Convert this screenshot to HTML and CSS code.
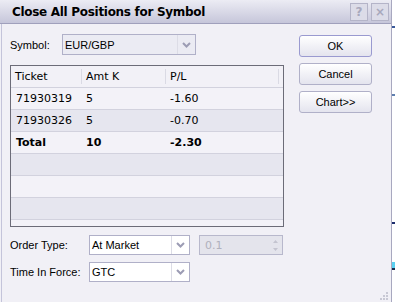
FILE: index.html
```html
<!DOCTYPE html>
<html lang="en">
<head>
    <meta charset="UTF-8">
    <title>Close All Positions for Symbol</title>
    <link rel="stylesheet" href="styles.css">
</head>
<body>
    <div class="page">
        <div class="window">
            <div class="titlebar">
                <span class="title">Close All Positions for Symbol</span>
                <div class="caption-buttons">
                    <span class="cap-btn">?</span>
                    <span class="cap-btn">&times;</span>
                </div>
            </div>
            <div class="content">
                <div class="main">
                    <div class="field-row symbol-row">
                        <span class="label symbol-label">Symbol:</span>
                        <div class="combo combo-symbol">
                            <span class="combo-text">EUR/GBP</span>
                            <span class="combo-arrow">
                                <svg width="9" height="6" viewBox="0 0 9 6"><path d="M1 1 L4.5 4.5 L8 1" fill="none" stroke="#9c9cb4" stroke-width="2"/></svg>
                            </span>
                        </div>
                    </div>

                    <div class="grid">
                        <div class="grid-row grid-head">
                            <div class="cell c1">Ticket</div>
                            <div class="cell c2">Amt K</div>
                            <div class="cell c3">P/L</div>
                        </div>
                        <div class="grid-row light">
                            <div class="cell c1">71930319</div>
                            <div class="cell c2">5</div>
                            <div class="cell c3">-1.60</div>
                        </div>
                        <div class="grid-row dark">
                            <div class="cell c1">71930326</div>
                            <div class="cell c2">5</div>
                            <div class="cell c3">-0.70</div>
                        </div>
                        <div class="grid-row light total">
                            <div class="cell c1">Total</div>
                            <div class="cell c2">10</div>
                            <div class="cell c3">-2.30</div>
                        </div>
                        <div class="grid-row dark"></div>
                        <div class="grid-row light"></div>
                        <div class="grid-row dark"></div>
                        <div class="grid-row light"></div>
                    </div>

                    <div class="field-row order-row">
                        <span class="label wide-label">Order Type:</span>
                        <div class="combo combo-small">
                            <span class="combo-text">At Market</span>
                            <span class="combo-arrow">
                                <svg width="9" height="6" viewBox="0 0 9 6"><path d="M1 1 L4.5 4.5 L8 1" fill="none" stroke="#9c9cb4" stroke-width="2"/></svg>
                            </span>
                        </div>
                        <div class="spinner">
                            <span class="spin-text">0.1</span>
                            <span class="spin-arrows">
                                <svg width="7" height="13" viewBox="0 0 7 13"><path d="M3.5 1 L6 4 L1 4 Z M1 9 L6 9 L3.5 12 Z" fill="#c4c4d0"/></svg>
                            </span>
                        </div>
                    </div>
                    <div class="field-row tif-row">
                        <span class="label wide-label">Time In Force:</span>
                        <div class="combo combo-small">
                            <span class="combo-text">GTC</span>
                            <span class="combo-arrow">
                                <svg width="9" height="6" viewBox="0 0 9 6"><path d="M1 1 L4.5 4.5 L8 1" fill="none" stroke="#9c9cb4" stroke-width="2"/></svg>
                            </span>
                        </div>
                    </div>
                </div>

                <div class="side">
                    <button class="btn btn-default">OK</button>
                    <button class="btn">Cancel</button>
                    <button class="btn">Chart&gt;&gt;</button>
                </div>
            </div>
            <svg class="grip" width="9" height="9" viewBox="0 0 9 9">
                <rect x="6" y="0" width="2" height="2" fill="#c8c8d4"/>
                <rect x="3" y="3" width="2" height="2" fill="#c8c8d4"/>
                <rect x="6" y="3" width="2" height="2" fill="#c8c8d4"/>
                <rect x="0" y="6" width="2" height="2" fill="#c8c8d4"/>
                <rect x="3" y="6" width="2" height="2" fill="#c8c8d4"/>
                <rect x="6" y="6" width="2" height="2" fill="#c8c8d4"/>
            </svg>
        </div>
        <div class="backdrop"></div>
    </div>
</body>
</html>
```

FILE: styles.css
```css
/* Dialog theme */
body {
    margin: 0;
    background-color: #ffffff;
    font-family: "Liberation Sans", Arial, sans-serif;
    font-size: 11px;
    color: #000;
}
.page {
    display: flex;
    height: 302px;
    overflow: hidden;
}
.window {
    width: 391px;
    height: 302px;
    border-right: 1px solid #a8a8c0;
    background: #f1f0f6;
    display: flex;
    flex-direction: column;
    position: relative;
}
.backdrop {
    width: 3px;
    background: linear-gradient(#ffffff 0, #ffffff 26px, #3a5a9a 26px, #3a5a9a 28px, #ffffff 28px, #ffffff 94px, #6080b0 94px, #6080b0 96px, #ffffff 96px, #ffffff 222px, #1c2c6c 222px, #1c2c6c 224px, #ffffff 224px, #ffffff 262px, #5ad0f0 262px, #5ad0f0 268px, #1c2c4c 268px, #1c2c4c 270px, #ffffff 270px);
}

/* Title bar */
.titlebar {
    height: 23px;
    border-bottom: 1px solid #a0a0bc;
    background: linear-gradient(#ececf4, #c6c6da);
    display: flex;
    align-items: center;
    justify-content: space-between;
    padding: 0 2px 0 12px;
}
.title {
    font-family: "DejaVu Sans", Verdana, sans-serif;
    font-weight: bold;
    font-size: 12px;
    letter-spacing: -0.3px;
    color: #000;
}
.caption-buttons {
    display: flex;
    gap: 3px;
    padding-top: 1px;
}
.cap-btn {
    width: 16px;
    height: 16px;
    border: 1px solid #b4b4c8;
    background: #dcdce8;
    color: #a8a8bc;
    font-family: "DejaVu Sans", Verdana, sans-serif;
    font-weight: bold;
    font-size: 12px;
    display: flex;
    align-items: center;
    justify-content: center;
}

/* Content */
.content {
    flex: 1;
    display: flex;
    margin-left: 1px;
    border-left: 1px solid #c4c4da;
    padding: 10px 0 0 8px;
}
.main {
    width: 274px;
    display: flex;
    flex-direction: column;
}
.field-row {
    display: flex;
    align-items: center;
}
.label {
    color: #000;
}
.symbol-label {
    width: 52px;
}
.wide-label {
    width: 79px;
}

/* Combo boxes */
.combo {
    display: flex;
    border: 1px solid #b0b0c8;
    background: #fff;
    box-sizing: border-box;
}
.combo-symbol {
    width: 134px;
    height: 21px;
    background: #ebebf3;
}
.combo-small {
    width: 101px;
    height: 20px;
}
.combo-text {
    flex: 1;
    display: flex;
    align-items: center;
    padding-left: 2px;
}
.combo-arrow {
    width: 17px;
    border-left: 1px solid #dcdce6;
    display: flex;
    align-items: center;
    justify-content: center;
}

/* Grid */
.grid {
    margin-top: 10px;
    height: 162px;
    box-sizing: border-box;
    border: 1px solid #6c6c78;
    overflow: hidden;
    font-family: "DejaVu Sans", Verdana, sans-serif;
    font-size: 11px;
}
.grid-row {
    display: flex;
    height: 21px;
    border-bottom: 1px solid #d2d2de;
    flex-shrink: 0;
}
.grid-head {
    background: #f2f1f7;
}
.grid-head .c1 {
    padding-left: 4px;
}
.grid-head .c2, .grid-head .c3 {
    border-left: 1px solid #dadae4;
    margin: 3px 0;
    padding-left: 4px;
}
.grid-head .c3 {
    flex: none;
    width: 114px;
    border-right: 1px solid #dadae4;
}
.light {
    background: #f3f2f8;
}
.dark {
    background: #e6e6ef;
}
.total {
    font-weight: bold;
}
.cell {
    display: flex;
    align-items: center;
    padding-left: 5px;
    box-sizing: border-box;
}
.c1 {
    width: 70px;
}
.c2 {
    width: 84px;
}
.c3 {
    flex: 1;
}

/* Order fields */
.order-row {
    margin-top: 8px;
}
.tif-row {
    margin-top: 7px;
}
.spinner {
    width: 84px;
    height: 20px;
    margin-left: 9px;
    box-sizing: border-box;
    border: 1px solid #b8b8cc;
    background: #e4e4ec;
    display: flex;
}
.spin-text {
    flex: 1;
    display: flex;
    align-items: center;
    padding-left: 5px;
    color: #b0b0bc;
    font-family: "DejaVu Sans", Verdana, sans-serif;
}
.spin-arrows {
    width: 14px;
    display: flex;
    align-items: center;
    justify-content: center;
}

/* Buttons */
.side {
    margin-left: 15px;
    padding-top: 1px;
    display: flex;
    flex-direction: column;
    gap: 6px;
}
.btn {
    width: 73px;
    height: 22px;
    border: 1px solid #b0b0c8;
    border-radius: 3px;
    background: linear-gradient(#ffffff, #e4e4ee);
    font-family: "Liberation Sans", Arial, sans-serif;
    font-size: 11px;
    color: #000;
    padding: 0;
}
.btn-default {
    border-color: #9a9ad0;
}
.grip {
    position: absolute;
    right: 2px;
    bottom: 1px;
}
```
